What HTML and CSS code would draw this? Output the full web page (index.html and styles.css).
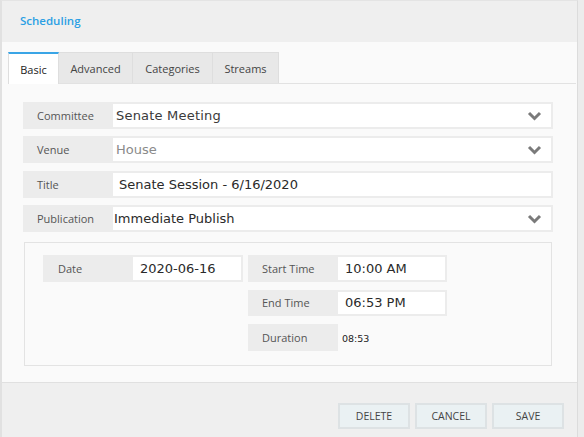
FILE: index.html
```html
<!DOCTYPE html>
<html>
<head>
<meta charset="utf-8">
<link rel="stylesheet" href="styles.css">
</head>
<body>
<div class="dialog">
  <div class="header"><span class="title">Scheduling</span></div>
  <div class="body">
    <div class="tabs">
      <div class="tab active">Basic</div>
      <div class="tab">Advanced</div>
      <div class="tab">Categories</div>
      <div class="tab">Streams</div>
    </div>
    <div class="form">
      <div class="row">
        <div class="label">Committee</div>
        <div class="value select committee"><span>Senate Meeting</span>
          <svg class="chev" width="15" height="10" viewBox="0 0 15 10"><polyline points="2,2 7.5,7.5 13,2" fill="none" stroke="#7a7a7a" stroke-width="3"/></svg>
        </div>
      </div>
      <div class="row">
        <div class="label">Venue</div>
        <div class="value select placeholder"><span>House</span>
          <svg class="chev" width="15" height="10" viewBox="0 0 15 10"><polyline points="2,2 7.5,7.5 13,2" fill="none" stroke="#7a7a7a" stroke-width="3"/></svg>
        </div>
      </div>
      <div class="row">
        <div class="label">Title</div>
        <div class="value text"><span>Senate Session - 6/16/2020</span></div>
      </div>
      <div class="row">
        <div class="label">Publication</div>
        <div class="value select publication"><span>Immediate Publish</span>
          <svg class="chev" width="15" height="10" viewBox="0 0 15 10"><polyline points="2,2 7.5,7.5 13,2" fill="none" stroke="#7a7a7a" stroke-width="3"/></svg>
        </div>
      </div>
      <div class="schedule">
        <div class="col">
          <div class="srow date">
            <div class="slabel">Date</div>
            <div class="svalue">2020-06-16</div>
          </div>
        </div>
        <div class="col">
          <div class="srow time">
            <div class="slabel">Start Time</div>
            <div class="svalue">10:00 AM</div>
          </div>
          <div class="srow time">
            <div class="slabel">End Time</div>
            <div class="svalue">06:53 PM</div>
          </div>
          <div class="srow plain">
            <div class="slabel">Duration</div>
            <div class="duration">08:53</div>
          </div>
        </div>
      </div>
    </div>
  </div>
  <div class="footer">
    <button class="btn">DELETE</button>
    <button class="btn">CANCEL</button>
    <button class="btn">SAVE</button>
  </div>
</div>
</body>
</html>
```
FILE: styles.css
```css
html, body {
  margin: 0;
  padding: 0;
  background: #ececec;
  width: 584px;
  height: 437px;
  overflow: hidden;
}
.dialog {
  width: 575px;
  height: 436px;
  border-left: 2px solid #e1e1e1;
  border-top: 1px solid #e4e4e4;
  border-right: 1px solid #dcdcdc;
  display: flex;
  flex-direction: column;
  font-family: "Open Sans", "DejaVu Sans", sans-serif;
}
.header {
  height: 41px;
  background: #efefef;
  display: flex;
  align-items: center;
  padding-left: 18px;
}
.title {
  color: #2c9fe4;
  font-size: 11.5px;
  font-weight: 600;
  margin-top: -3px;
}
.body {
  background: #fafafa;
  height: 340px;
  display: flex;
  flex-direction: column;
}
.tabs {
  display: flex;
  margin: 10px 1px 0 6px;
  border-bottom: 1px solid #e2e2e2;
  height: 31px;
}
.tab {
  font-size: 11px;
  color: #444;
  background: #e8e8e8;
  border: 1px solid #dedede;
  border-bottom: none;
  display: flex;
  align-items: center;
  justify-content: center;
  box-sizing: border-box;
  height: 31px;
  margin-right: -1px;
}
.tab:nth-child(1) { width: 51px; }
.tab:nth-child(2) { width: 75px; }
.tab:nth-child(3) { width: 81px; }
.tab:nth-child(4) { width: 67px; }
.tab.active {
  background: #ffffff;
  color: #222;
  border-top: 2px solid #3aa5e6;
  height: 32px;
  margin-bottom: -1px;
  position: relative;
}
.form {
  padding: 18px 24px 0 21px;
  display: flex;
  flex-direction: column;
}
.row {
  display: flex;
  height: 27px;
  background: #ececec;
  margin-bottom: 7.4px;
  box-sizing: border-box;
  padding: 2px 2px 2px 0;
}
.label {
  width: 90px;
  flex: none;
  font-size: 11px;
  color: #555;
  padding-left: 14px;
  box-sizing: border-box;
  display: flex;
  align-items: center;
}
.value {
  flex: 1;
  background: #fff;
  display: flex;
  align-items: center;
  font-family: "DejaVu Sans", Verdana, sans-serif;
  font-size: 13px;
  color: #2a2a2a;
  padding-left: 3px;
}
.value.text { padding-left: 6px; }
.value.publication { padding-left: 1px; }
.value.placeholder { color: #8a8a8a; }
.value.committee span { letter-spacing: 0.2px; color: #3a3a3a; }
.select { justify-content: space-between; padding-right: 9px; }
.chev { flex: none; }
.schedule {
  margin-top: 2px;
  margin-left: 1px;
  margin-right: 1px;
  height: 124px;
  box-sizing: border-box;
  border: 1px solid #e3e3e3;
  padding: 12.5px 0 0 18px;
  display: flex;
  gap: 5px;
  align-items: flex-start;
}
.col {
  display: flex;
  flex-direction: column;
  gap: 8px;
}
.srow {
  display: flex;
  height: 26.5px;
  background: #ececec;
  box-sizing: border-box;
  padding: 2px 2px 2px 0;
}
.srow.date { width: 200px; }
.srow.time { width: 199px; }
.srow.plain { background: transparent; padding: 0; }
.slabel {
  width: 90px;
  flex: none;
  font-size: 11px;
  color: #555;
  padding-left: 14px;
  box-sizing: border-box;
  display: flex;
  align-items: center;
  background: #ececec;
}
.date .slabel { padding-left: 15px; }
.svalue {
  flex: 1;
  background: #fff;
  display: flex;
  align-items: center;
  font-family: "DejaVu Sans", Verdana, sans-serif;
  font-size: 13px;
  color: #2a2a2a;
  padding-left: 7px;
}
.duration {
  font-family: "DejaVu Sans", Verdana, sans-serif;
  font-size: 9.5px;
  color: #222;
  display: flex;
  align-items: center;
  padding-left: 4px;
  padding-top: 2px;
}
.footer {
  flex: 1;
  background: #efefef;
  border-top: 1px solid #e0e0e0;
  display: flex;
  justify-content: flex-end;
  align-items: flex-start;
  gap: 5px;
  padding: 20px 13px 0 0;
}
.btn {
  width: 72px;
  height: 26px;
  background: #eaf1f3;
  border: 2px solid #dde2e4;
  font-family: "Open Sans", sans-serif;
  font-size: 10.5px;
  color: #444;
  padding: 0;
  margin: 0;
}
```
